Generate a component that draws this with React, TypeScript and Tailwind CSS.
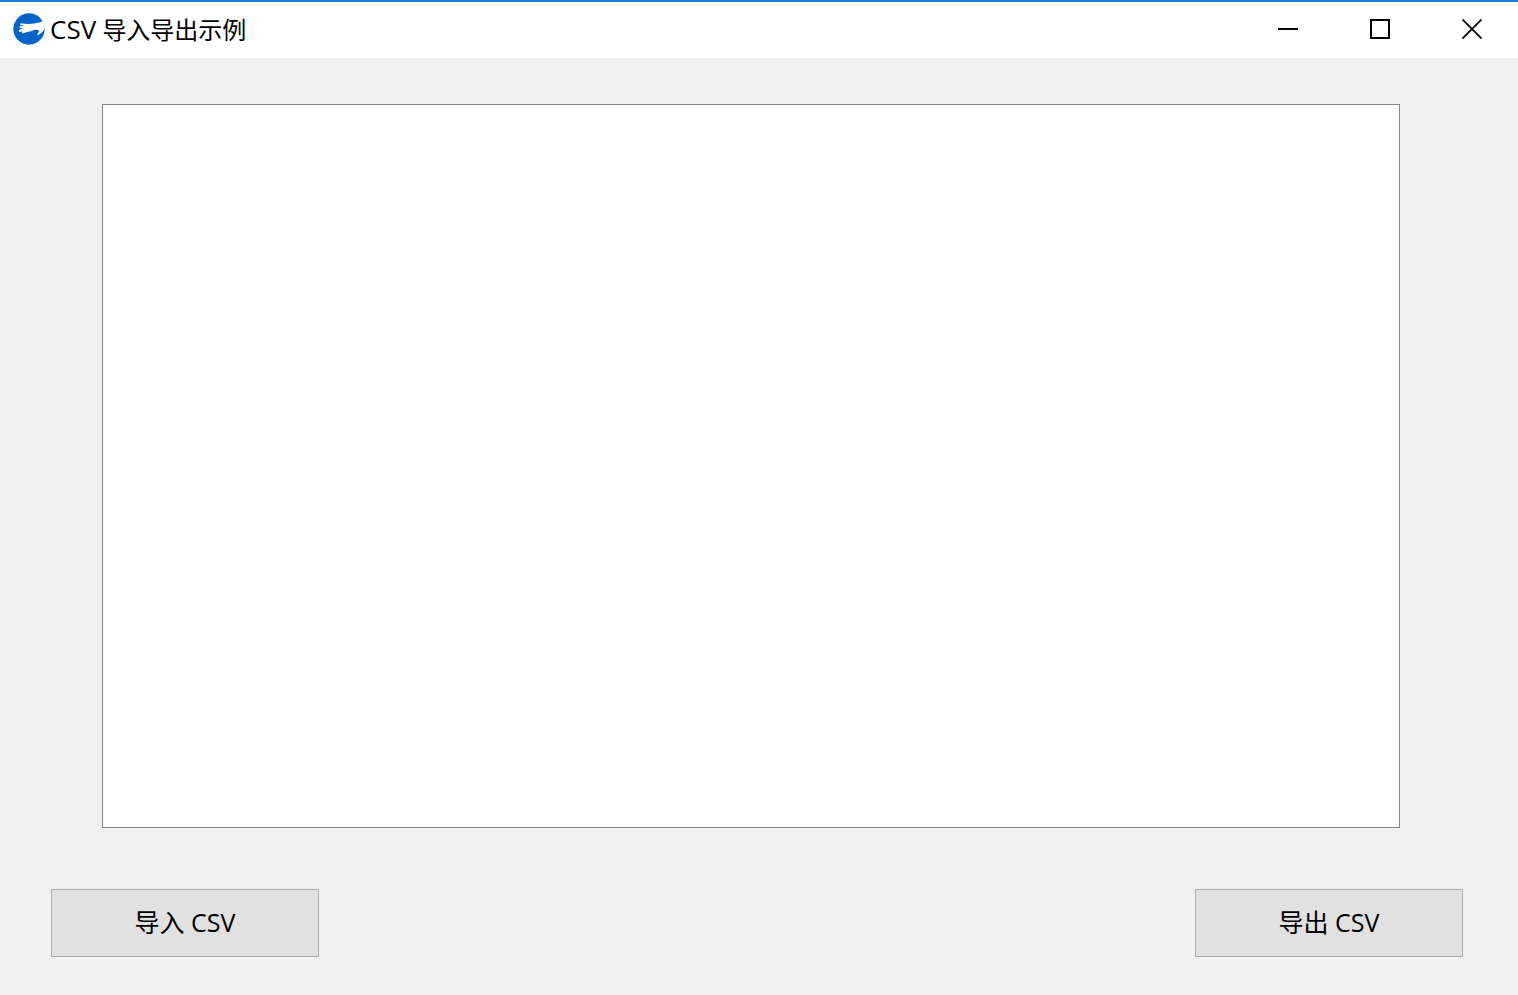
import React, { useState } from 'react';

const Logo = () => (
  <svg viewBox="0 0 96 96" className="size-8" aria-hidden="true">
    <circle cx="48" cy="48" r="47" fill="#0563c8" />
    <path
      d="M22 31 L44 33 C60 33 76 31 91 24 L96 36 L96 46 C90 56 84 63 73 67 C71 64 77 60 79 53 C72 49 64 50 56 54 L46 56 L31 61 C26 62 25 57 29 55 L34 53 L21 57 C16 56 16 52 20 50 L31 45 L22 45 C18 44 18 41 22 40 L34 38 L22 36 Z"
      fill="#fff"
    />
  </svg>
);

const TitleBar = () => {
  return (
    <header className="flex h-[58px] items-stretch justify-between border-t-2 border-[#1a80d9] bg-white pb-0.5">
      <div className="flex items-center gap-[5px] pl-[13px]">
        <Logo />
        <h1 className="text-2xl">
          <span className="text-[26px]">CSV</span> 导入导出示例
        </h1>
      </div>

      <div className="flex">
        <button aria-label="最小化" className="flex w-[92px] items-center justify-center hover:bg-[#e5e5e5]">
          <svg width="20" height="20" viewBox="0 0 20 20" shapeRendering="crispEdges">
            <path d="M0 10H20" stroke="#000" strokeWidth="2" />
          </svg>
        </button>
        <button aria-label="最大化" className="flex w-[92px] items-center justify-center hover:bg-[#e5e5e5]">
          <svg width="20" height="20" viewBox="0 0 20 20" shapeRendering="crispEdges">
            <rect x="1" y="1" width="18" height="18" fill="none" stroke="#000" strokeWidth="2" />
          </svg>
        </button>
        <button aria-label="关闭" className="flex w-[92px] items-center justify-center hover:bg-[#e81123]">
          <svg width="20" height="20" viewBox="0 0 20 20">
            <path d="M0.5 0.5L19.5 19.5M19.5 0.5L0.5 19.5" stroke="#000" strokeWidth="1.8" />
          </svg>
        </button>
      </div>
    </header>
  );
};

const App = () => {
  const [content, setContent] = useState('');

  return (
    <div className="flex min-h-screen flex-col bg-[#f0f0f0] font-['Open_Sans','Noto_Sans_CJK_SC',sans-serif] text-black">
      <TitleBar />

      <main className="flex flex-1 flex-col pt-[46px] pb-[38px]">
        <textarea
          aria-label="CSV"
          value={content}
          onChange={(e) => setContent(e.target.value)}
          className="mr-[118px] ml-[102px] flex-1 resize-none border border-[#828790] bg-white p-2 text-2xl outline-none"
        />

        {/* Import / export actions */}
        <div className="mt-[61px] mr-[55px] ml-[51px] flex justify-between">
          <button className="h-[68px] w-[268px] border border-[#adadad] bg-[#e1e1e1] text-[25px] hover:bg-[#e5f1fb]">
            导入 CSV
          </button>
          <button className="h-[68px] w-[268px] border border-[#adadad] bg-[#e1e1e1] text-[25px] hover:bg-[#e5f1fb]">
            导出 CSV
          </button>
        </div>
      </main>
    </div>
  );
};

export default App;
